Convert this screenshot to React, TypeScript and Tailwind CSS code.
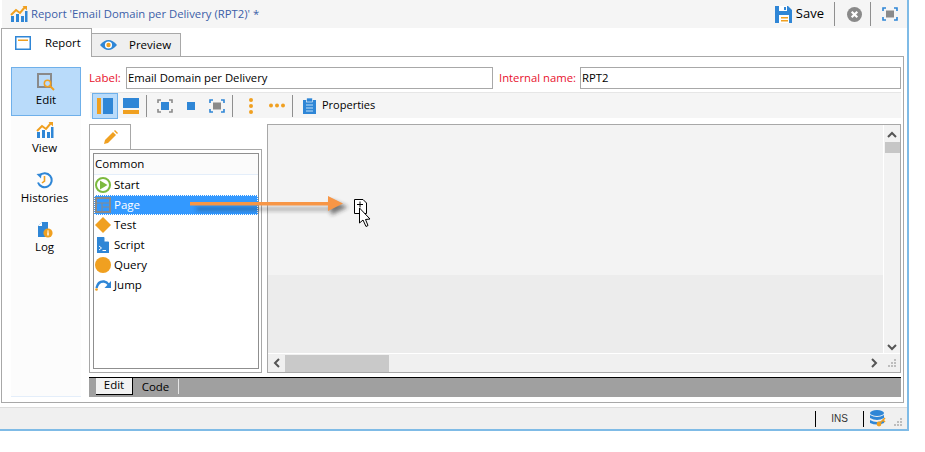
import type { ReactNode } from "react";

const font = "font-['Open_Sans','Noto_Sans',sans-serif]";

function ChartIcon({ size = 18 }: { size?: number }) {
  return (
    <svg width={size} height={size} viewBox="0 0 18 18">
      <rect x="1" y="11" width="3" height="6" fill="#2f86d6" />
      <rect x="6" y="9" width="3" height="8" fill="#2f86d6" />
      <rect x="11" y="11" width="3" height="6" fill="#2f86d6" />
      <rect x="15" y="6" width="2.5" height="11" fill="#2f86d6" />
      <path d="M1 10 L6 5 L10 8 L15 2" fill="none" stroke="#f0a020" strokeWidth="2" />
      <path d="M12.5 1 H17 V5.5 Z" fill="#f0a020" />
    </svg>
  );
}

function SaveIcon() {
  return (
    <svg width="17" height="17" viewBox="0 0 17 17">
      <path d="M0 0 H13 L17 4 V17 H0 Z" fill="#2f86d6" />
      <rect x="4" y="0" width="8" height="5" fill="#fff" />
      <rect x="9" y="1" width="2" height="3" fill="#2f86d6" />
      <rect x="4" y="9" width="10" height="8" fill="#fff" />
      <rect x="6" y="11" width="7" height="1.5" fill="#f0a020" />
      <rect x="6" y="14" width="7" height="1.5" fill="#f0a020" />
    </svg>
  );
}

function CloseIcon() {
  return (
    <svg width="15" height="15" viewBox="0 0 15 15">
      <circle cx="7.5" cy="7.5" r="7.5" fill="#8a8a8a" />
      <path d="M4.7 4.7 L10.3 10.3 M10.3 4.7 L4.7 10.3" stroke="#fff" strokeWidth="2.2" />
    </svg>
  );
}

function FrameIcon() {
  return (
    <svg width="16" height="14" viewBox="0 0 16 14">
      <path d="M1 4 V1 H4 M12 1 H15 V4 M15 10 V13 H12 M4 13 H1 V10" fill="none" stroke="#2f86d6" strokeWidth="1.6" />
      <rect x="4" y="3.5" width="8" height="7" fill="#8a8a8a" />
    </svg>
  );
}

function Divider() {
  return <div className="mx-[7px] h-[22px] w-px bg-[#8f8f8f]" />;
}

function SideButton({ label, icon, active, className }: { label: string; icon: ReactNode; active?: boolean; className?: string }) {
  return (
    <div
      className={`flex flex-col items-center border ${active ? "h-[49px] border-[#6fb0ea] bg-[#b9dbfa] pt-[5px]" : "border-transparent pr-[3px]"} ${className ?? ""}`}
    >
      <div className="flex h-[18px] items-center">{icon}</div>
      <span className="text-[11.5px] leading-[17px] text-black">{label}</span>
    </div>
  );
}

function TreeRow({ label, icon, selected }: { label: string; icon: ReactNode; selected?: boolean }) {
  return (
    <div
      className={`flex h-5 items-center ${selected ? "bg-[#3399ff] text-white outline-1 -outline-offset-1 outline-dotted outline-white" : "text-black"}`}
    >
      <div className="ml-px mr-[3px] flex w-[16px] shrink-0 justify-center">{icon}</div>
      <span className="text-[11.5px] leading-none">{label}</span>
    </div>
  );
}

export default function App() {
  return (
    <div className={`${font} h-[452px] w-[925px] overflow-hidden bg-white`}>
      <div className="flex h-[431px] w-[909px] flex-col border-r-2 border-b-2 border-[#7fbbe6] bg-white">
        {/* title bar */}
        <div className="ml-[2px] flex h-[28px] shrink-0 items-center bg-[#f5f5f5] pl-[8px] pr-[9px]">
          <ChartIcon />
          <span className="ml-[3px] text-[11.3px] text-[#3b5ea8]">Report 'Email Domain per Delivery (RPT2)' *</span>
          <div className="ml-auto flex items-center">
            <SaveIcon />
            <span className="ml-[4px] text-[13px] text-black">Save</span>
            <div className="ml-[10px] mr-[12px] h-[24px] w-px bg-[#8f8f8f]" />
            <CloseIcon />
            <div className="ml-[8px] mr-[11px] h-[24px] w-px bg-[#8f8f8f]" />
            <FrameIcon />
          </div>
        </div>

        {/* tabs */}
        <div className="relative z-10 ml-[1px] flex h-[29px] shrink-0 items-end">
          <div className="flex h-[29px] w-[91px] items-center gap-[14px] border border-b-0 border-[#a8a8a8] bg-white pl-[13px]">
            <svg width="16" height="14" viewBox="0 0 16 14">
              <rect x="0.75" y="0.75" width="14.5" height="12.5" fill="#fff" stroke="#2f86d6" strokeWidth="1.5" />
              <rect x="3" y="3.5" width="10" height="1.5" fill="#f0a020" />
            </svg>
            <span className="text-[11.3px] text-black">Report</span>
          </div>
          <div className="mb-[1px] flex h-[23px] w-[89px] items-center gap-[12px] border border-b-0 border-l-0 border-[#a8a8a8] bg-[#efefef] pl-[8px]">
            <svg width="17" height="12" viewBox="0 0 17 12">
              <path d="M0 6 Q8.5 -4 17 6 Q8.5 16 0 6 Z" fill="#2f86d6" />
              <circle cx="8.5" cy="6" r="3.6" fill="#fff" />
              <circle cx="8.5" cy="6" r="2.2" fill="#f0a020" />
            </svg>
            <span className="text-[11.5px] text-black">Preview</span>
          </div>
        </div>

        {/* panel */}
        <div className="-mt-px ml-[1px] mr-[3px] flex h-[347px] shrink-0 border border-[#a8a8a8] bg-white pt-[10px] pl-[9px] pr-[2px]">
          <div className="flex h-[330px] w-[70px] shrink-0 flex-col border-b border-[#e4eefa] bg-[#fcfcfc]">
            <SideButton
              active
              label="Edit"
              icon={
                <svg width="18" height="18" viewBox="0 0 18 18">
                  <rect x="1" y="1" width="13" height="13" fill="none" stroke="#8a8a8a" strokeWidth="2" />
                  <circle cx="10.5" cy="10.5" r="3.2" fill="#b9dbfa" stroke="#f0a020" strokeWidth="1.5" />
                  <path d="M13 13 L17 17" stroke="#f0a020" strokeWidth="2" />
                </svg>
              }
            />
            <SideButton className="mt-[4px]" label="View" icon={<ChartIcon />} />
            <SideButton
              className="mt-[13px]"
              label="Histories"
              icon={
                <svg width="17" height="17" viewBox="0 0 17 17">
                  <path d="M3.5 3.5 A7 7 0 1 1 2 10.5" fill="none" stroke="#2f86d6" strokeWidth="2" />
                  <path d="M0.5 2 L5.5 1.5 L5 6.5 Z" fill="#2f86d6" />
                  <path d="M8.5 4 V9 L6 11" fill="none" stroke="#f0a020" strokeWidth="1.6" />
                </svg>
              }
            />
            <SideButton
              className="mt-[12px]"
              label="Log"
              icon={
                <svg width="16" height="17" viewBox="0 0 16 17">
                  <path d="M1 5 L5 1 H11 V16 H1 Z" fill="#2f86d6" />
                  <path d="M5 1 V5 H1 Z" fill="#fff" />
                  <circle cx="11" cy="12" r="4.6" fill="#f0a020" />
                  <rect x="10.3" y="9.5" width="1.4" height="1.2" fill="#fff" />
                  <rect x="10.3" y="11.2" width="1.4" height="3.3" fill="#fff" />
                </svg>
              }
            />
          </div>

          <div className="ml-[8px] flex w-[812px] shrink-0 flex-col">
            {/* label row */}
            <div className="flex h-[22px] shrink-0 items-center">
              <span className="w-[37px] text-[11.5px] text-[#e8112d]">Label:</span>
              <div className="flex h-[22px] w-[367px] items-center border border-[#a8a8a8] pl-[1px] text-[11.3px] text-black">
                Email Domain per Delivery
              </div>
              <span className="ml-[6px] w-[81px] whitespace-nowrap text-[11.3px] text-[#e8112d]">Internal name:</span>
              <div className="flex h-[22px] w-[321px] items-center border border-[#a8a8a8] pl-[1px] text-[11.3px] text-black">
                RPT2
              </div>
            </div>

            {/* toolbar */}
            <div className="ml-[1px] mt-[3px] flex h-[26px] w-[811px] shrink-0 items-center border-t border-[#e6e6e6] bg-[#f5f5f5] pl-[2px]">
              <div className="flex h-[26px] w-[26px] items-center justify-center border border-[#6fb0ea] bg-[#b9dbfa]">
                <svg width="16" height="16" viewBox="0 0 16 16">
                  <rect x="0" y="0" width="4" height="16" fill="#f0a020" />
                  <rect x="6" y="0" width="10" height="16" fill="#2f86d6" />
                </svg>
              </div>
              <div className="ml-[5px]">
                <svg className="block" width="16" height="16" viewBox="0 0 16 16">
                  <rect x="0" y="0" width="16" height="10" fill="#2f86d6" />
                  <rect x="0" y="12" width="16" height="4" fill="#f0a020" />
                </svg>
              </div>
              <Divider />
              <svg className="ml-[3px]" width="16" height="14" viewBox="0 0 16 14">
                <path d="M1 4 V1 H4 M12 1 H15 V4 M15 10 V13 H12 M4 13 H1 V10" fill="none" stroke="#8a8a8a" strokeWidth="1.6" />
                <rect x="4" y="3" width="8" height="8" fill="#2f86d6" />
              </svg>
              <svg className="ml-[14px]" width="8" height="8" viewBox="0 0 8 8">
                <rect width="8" height="8" fill="#2f86d6" />
              </svg>
              <div className="ml-[14px] flex">
                <FrameIcon />
              </div>
              <Divider />
              <svg className="ml-[8px]" width="6" height="16" viewBox="0 0 6 16">
                <circle cx="3" cy="2" r="2" fill="#f0a020" />
                <circle cx="3" cy="8" r="2" fill="#f0a020" />
                <circle cx="3" cy="14" r="2" fill="#f0a020" />
              </svg>
              <svg className="ml-[15px]" width="16" height="5" viewBox="0 0 16 5">
                <circle cx="2" cy="2.5" r="2" fill="#f0a020" />
                <circle cx="8" cy="2.5" r="2" fill="#f0a020" />
                <circle cx="14" cy="2.5" r="2" fill="#f0a020" />
              </svg>
              <Divider />
              <svg className="ml-[3px]" width="13" height="16" viewBox="0 0 13 16">
                <rect x="0" y="2" width="13" height="14" fill="#2f86d6" />
                <rect x="3.5" y="0" width="6" height="4" fill="#2f86d6" stroke="#fff" strokeWidth="0.6" />
                <path d="M3 7 H10 M3 10 H10 M3 13 H10" stroke="#bfe0fa" strokeWidth="1" />
              </svg>
              <span className="ml-[6px] text-[11px] text-black">Properties</span>
            </div>

            {/* editor */}
            <div className="mt-[6px] flex h-[249px] shrink-0">
              <div className="flex w-[173px] shrink-0 flex-col">
                <div className="flex h-[26px] w-[42px] shrink-0 items-center justify-center border border-b-0 border-[#a8a8a8] bg-white">
                  <svg width="15" height="15" viewBox="0 0 15 15">
                    <path d="M1 14 L2 10 L10 2 L13 5 L5 13 Z" fill="#f0a020" />
                    <path d="M11 1 L12 0 L15 3 L14 4 Z" fill="#f0a020" />
                  </svg>
                </div>
                <div className="-mt-px h-[224px] border border-[#a8a8a8] pl-[3px] pr-[2px] pt-[3px]">
                  <div className="h-[216px] border border-[#8f8f8f] bg-white">
                    <div className="flex h-[21px] items-center border-b border-[#e4eefa] bg-[#fbfbfb] pl-[1px] text-[11.5px] text-black">
                      Common
                    </div>
                    <TreeRow
                      label="Start"
                      icon={
                        <svg width="16" height="16" viewBox="0 0 16 16">
                          <circle cx="8" cy="8" r="7" fill="#fff" stroke="#7cba3f" strokeWidth="2" />
                          <path d="M5 3.5 L12.5 8 L5 12.5 Z" fill="#7cba3f" />
                        </svg>
                      }
                    />
                    <TreeRow
                      selected
                      label="Page"
                      icon={
                        <svg width="16" height="16" viewBox="0 0 16 16">
                          <rect x="1" y="1" width="14" height="14" fill="none" stroke="#8a8a8a" strokeWidth="2" />
                          <path d="M2 6 H14 M7 6 V14 M7 10 H14" stroke="#8a8a8a" strokeWidth="1" />
                        </svg>
                      }
                    />
                    <TreeRow
                      label="Test"
                      icon={
                        <svg width="16" height="16" viewBox="0 0 16 16">
                          <path d="M8 0 L16 8 L8 16 L0 8 Z" fill="#f0a020" />
                        </svg>
                      }
                    />
                    <TreeRow
                      label="Script"
                      icon={
                        <svg width="12" height="16" viewBox="0 0 12 16">
                          <path d="M0 0 H7 L12 5 V16 H0 Z" fill="#2f86d6" />
                          <path d="M7.5 0 L12 4.5 H7.5 Z" fill="#fff" />
                          <path d="M2 9 L4.5 11 L2 13 M5.5 13.5 H9" fill="none" stroke="#fff" strokeWidth="1" />
                        </svg>
                      }
                    />
                    <TreeRow
                      label="Query"
                      icon={
                        <svg width="16" height="16" viewBox="0 0 16 16">
                          <circle cx="8" cy="8" r="8" fill="#f0a020" />
                        </svg>
                      }
                    />
                    <TreeRow
                      label="Jump"
                      icon={
                        <svg width="16" height="12" viewBox="0 0 16 12">
                          <path d="M1.5 9 Q3 2 9 2.5 Q12 3 13.5 5.5" fill="none" stroke="#2f86d6" strokeWidth="2.4" />
                          <path d="M16 2 V9 H9.5 Z" fill="#2f86d6" />
                          <circle cx="1.5" cy="10.5" r="1.3" fill="#f0a020" />
                        </svg>
                      }
                    />
                  </div>
                </div>
              </div>

              <div className="ml-[5px] flex h-[249px] w-[634px] shrink-0 flex-col border border-[#a8a8a8] bg-[#f0f0f0]">
                <div className="flex h-[228px] shrink-0">
                  <div className="flex-1 border-r border-white">
                    <div className="h-[150px] bg-[#f3f3f3]" />
                    <div className="h-[78px] bg-[#ececec]" />
                  </div>
                  <div className="flex w-[16px] shrink-0 flex-col items-center bg-[#f2f2f2]">
                    <svg className="mt-[6px]" width="10" height="7" viewBox="0 0 10 7">
                      <path d="M1 6 L5 2 L9 6" fill="none" stroke="#555" strokeWidth="2" />
                    </svg>
                    <div className="mt-[4px] h-[11px] w-[15px] bg-[#c6c6c6]" />
                    <svg className="mt-auto mb-[2px]" width="10" height="7" viewBox="0 0 10 7">
                      <path d="M1 1 L5 5 L9 1" fill="none" stroke="#555" strokeWidth="2" />
                    </svg>
                  </div>
                </div>
                <div className="flex h-[19px] shrink-0 items-center border-t border-white bg-[#f0f0f0]">
                  <svg className="ml-[5px]" width="7" height="10" viewBox="0 0 7 10">
                    <path d="M6 1 L2 5 L6 9" fill="none" stroke="#555" strokeWidth="2" />
                  </svg>
                  <div className="ml-[5px] h-[17px] w-[104px] bg-[#c9c9c9]" />
                  <svg className="ml-auto mr-[9px]" width="7" height="10" viewBox="0 0 7 10">
                    <path d="M1 1 L5 5 L1 9" fill="none" stroke="#555" strokeWidth="2" />
                  </svg>
                  <svg className="mr-[3px]" width="10" height="10" viewBox="0 0 10 10">
                    <path d="M7 1 H9 V3 H7 Z M4 4 H6 V6 H4 Z M7 4 H9 V6 H7 Z M1 7 H3 V9 H1 Z M4 7 H6 V9 H4 Z M7 7 H9 V9 H7 Z" fill="#bdbdbd" />
                  </svg>
                </div>
              </div>
            </div>

            {/* bottom tabs */}
            <div className="mt-[4px] flex h-[20px] w-[812px] shrink-0 items-start border-t border-black bg-[#a0a0a0] pl-[7px]">
              <div className="flex h-[17px] w-[37px] items-center justify-center border-r border-b border-black bg-[#f2f2f2] pb-[2px] text-[11.5px] text-black">
                Edit
              </div>
              <div className="mt-[1px] flex h-[15px] w-[46px] items-center justify-center border-r border-[#e6e6e6] text-[11.5px] text-black">
                Code
              </div>
            </div>
          </div>
        </div>

        {/* status bar */}
        <div className="mt-[4px] flex h-[23px] flex-1 items-center border-t border-[#dcdcdc] bg-[#f0f0f0]">
          <div className="ml-auto flex items-center">
            <div className="h-[16px] w-px bg-black" />
            <span className="w-[47px] text-center font-['Liberation_Sans',sans-serif] text-[10px] text-[#333]">INS</span>
            <div className="h-[16px] w-px bg-black" />
            <svg className="ml-[6px]" width="16" height="17" viewBox="0 0 16 17">
              <ellipse cx="7" cy="3" rx="7" ry="3" fill="#2f86d6" />
              <path d="M0 5 Q7 9 14 5 V8 Q7 12 0 8 Z" fill="#2f86d6" />
              <path d="M0 10 Q7 14 14 10 V13 Q7 16 0 13 Z" fill="#2f86d6" />
              <circle cx="9" cy="14" r="2.4" fill="#f0a020" />
              <path d="M10 13 L15 8 M13 10 L15 12" stroke="#f0a020" strokeWidth="1.6" />
            </svg>
            <svg className="ml-[7px] mr-[4px] mt-[6px]" width="10" height="10" viewBox="0 0 10 10">
              <path d="M7 1 H9 V3 H7 Z M4 4 H6 V6 H4 Z M7 4 H9 V6 H7 Z M1 7 H3 V9 H1 Z M4 7 H6 V9 H4 Z M7 7 H9 V9 H7 Z" fill="#bdbdbd" />
            </svg>
          </div>
        </div>
      </div>

      {/* drag arrow and cursor lying over the panels */}
      <svg className="pointer-events-none absolute left-[185px] top-[190px]" width="200" height="45" viewBox="0 0 200 45">
        <defs>
          <filter id="arrow-shadow" x="-10%" y="-100%" width="120%" height="300%">
            <feGaussianBlur stdDeviation="2" />
          </filter>
        </defs>
        <path d="M11 18 H146 V10 L163 17 L146 25 V20 H11 Z" fill="#222" opacity="0.6" filter="url(#arrow-shadow)" />
        <path d="M5 12 H143 V6 L158 13.5 L143 21 V15.5 H5 Z" fill="#f79646" />
        <path d="M169.5 9.5 H178 L181.5 13 V23.5 H169.5 Z" fill="#fff" stroke="#000" strokeWidth="1" />
        <path d="M172 14.5 H178 M175 11.5 V17.5" stroke="#000" strokeWidth="1" />
        <path d="M174.5 18 V33 L178 30 L181 36.5 L183 35.5 L180.5 29.5 L185 29 Z" fill="#fff" stroke="#000" strokeWidth="1" />
      </svg>
    </div>
  );
}
